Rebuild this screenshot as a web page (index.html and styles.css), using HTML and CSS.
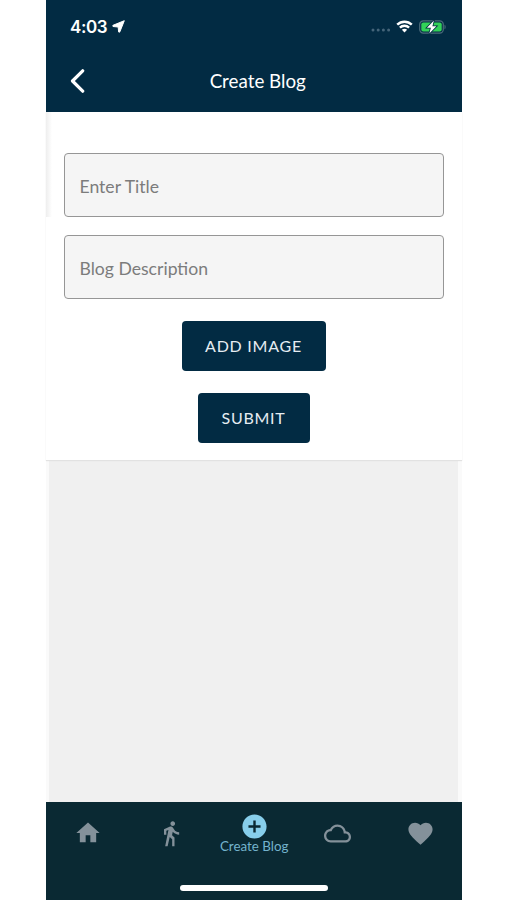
FILE: index.html
```html
<!DOCTYPE html>
<html lang="en">
  <head>
    <meta charset="utf-8">
    <title>Create Blog</title>
    <link rel="stylesheet" href="styles.css">
  </head>
  <body>
    <div class="phone">
      <header class="header">
        <div class="status-bar">
          <span class="time">4:03</span>
          <svg class="location" width="13" height="13" viewBox="0 0 13 13">
            <path d="M12.3.7 7.8 11.9Q7.2 12.7 6.6 11.9L6.2 7 1 6.5Q.2 5.9 1 5.3Z"/>
          </svg>
          <div class="status-icons">
            <svg class="signal" width="20" height="4" viewBox="0 0 20 4">
              <circle cx="2" cy="2" r="1.5"/><circle cx="7.2" cy="2" r="1.5"/><circle cx="12.4" cy="2" r="1.5"/><circle cx="17.6" cy="2" r="1.5"/>
            </svg>
            <svg class="wifi" width="17" height="13" viewBox="0 0 17 13">
              <path d="M8.5 8.7c-1 0-1.9.4-2.6 1L8.5 12.6 11.1 9.7C10.4 9.1 9.5 8.7 8.5 8.7Z"/>
              <path class="arc" d="M3.9 7.6a6.6 6.6 0 0 1 9.2 0M1.2 4.7a10.4 10.4 0 0 1 14.6 0"/>
            </svg>
            <svg class="battery" width="28" height="14" viewBox="0 0 28 14">
              <rect class="case" x=".7" y=".9" width="23.6" height="12.2" rx="3.6"/>
              <path class="cap" d="M25.5 4.7c1.5.5 1.5 4.1 0 4.6Z"/>
              <rect class="charge" x="2.3" y="2.5" width="20.4" height="9" rx="2"/>
              <path class="bolt" d="M14.9.5 7.9 7.8h4L10.3 13.5 17.4 6.2h-4Z"/>
            </svg>
          </div>
        </div>
        <div class="title-bar">
          <svg class="back" width="16" height="24" viewBox="0 0 16 24">
            <path d="M12.7 1.8 2.5 12 12.7 22.2"/>
          </svg>
          <h1>Create Blog</h1>
        </div>
      </header>

      <main class="content">
        <form class="card">
          <div class="field">Enter Title</div>
          <div class="field">Blog Description</div>
          <button type="button" class="button">ADD IMAGE</button>
          <button type="button" class="button">SUBMIT</button>
        </form>
      </main>

      <nav class="tabs">
        <a class="tab">
          <svg width="28" height="28" viewBox="0 0 24 24"><path d="M10 20v-6h4v6h5v-8h3L12 3 2 12h3v8z"/></svg>
        </a>
        <a class="tab">
          <svg width="28" height="29" viewBox="0 0 24 24"><path d="M13.5 5.5c1.1 0 2-.9 2-2s-.9-2-2-2-2 .9-2 2 .9 2 2 2zM9.8 8.9 7 23h2.1l1.8-8 2.1 2v6h2v-7.5l-2.1-2 .6-3C14.8 12 16.8 13 19 13v-2c-1.9 0-3.5-1-4.3-2.4l-1-1.6c-.4-.6-1-1-1.7-1-.3 0-.5.1-.8.1L6 8.3V13h2V9.6l1.8-.7"/></svg>
        </a>
        <a class="tab active">
          <svg width="29" height="29" viewBox="0 0 24 24"><path d="M12 2C6.48 2 2 6.48 2 12s4.48 10 10 10 10-4.48 10-10S17.52 2 12 2zm5 11h-4v4h-2v-4H7v-2h4V7h2v4h4v2z"/></svg>
          <span>Create Blog</span>
        </a>
        <a class="tab">
          <svg width="27" height="27" viewBox="0 0 24 24"><path d="M19.35 10.04C18.67 6.59 15.64 4 12 4 9.11 4 6.6 5.64 5.35 8.04 2.34 8.36 0 10.91 0 14c0 3.31 2.69 6 6 6h13c2.76 0 5-2.24 5-5 0-2.64-2.05-4.78-4.65-4.96zM19 18H6c-2.21 0-4-1.79-4-4s1.79-4 4-4h.71C7.37 7.69 9.48 6 12 6c3.04 0 5.5 2.46 5.5 5.5v.5H19c1.66 0 3 1.34 3 3s-1.34 3-3 3z"/></svg>
        </a>
        <a class="tab">
          <svg width="29" height="29" viewBox="0 0 24 24"><path d="m12 21.35-1.45-1.32C5.4 15.36 2 12.28 2 8.5 2 5.42 4.42 3 7.5 3c1.74 0 3.41.81 4.5 2.09C13.09 3.81 14.76 3 16.5 3 19.58 3 22 5.42 22 8.5c0 3.78-3.4 6.86-8.55 11.54L12 21.35z"/></svg>
        </a>
        <div class="home-indicator"></div>
      </nav>
    </div>
  </body>
</html>
```
FILE: styles.css
```css
body{
  margin: 0;
  background: white;
  font-family: Lato, sans-serif;
}
.phone{
  display: flex;
  flex-direction: column;
  width: 415.5px;
  height: 900px;
  margin-left: 46px;
}

/* header */
.header{
  height: 111.5px;
  background: #022b43;
  color: white;
}
.status-bar{
  display: flex;
  align-items: center;
  height: 53px;
  padding: 0 15px 0 24px;
}
.time{
  font: 600 17px Inter, sans-serif;
  letter-spacing: -0.4px;
}
.location{
  margin-left: 4.5px;
  fill: white;
  stroke: white;
  stroke-width: 1;
  stroke-linejoin: round;
}
.status-icons{
  display: flex;
  align-items: center;
  margin-left: auto;
}
.signal{
  margin: 7px 5px 0 0;
  fill: #45657a;
}
.wifi{
  margin-right: 6px;
  fill: white;
}
.arc{
  fill: none;
  stroke: white;
  stroke-width: 2.4;
}
.case{
  fill: none;
  stroke: #4c6b7b;
  stroke-width: 1.2;
}
.cap{
  fill: #4c6b7b;
}
.charge{
  fill: #32d158;
}
.bolt{
  fill: white;
  stroke: #022b43;
  stroke-width: 1.6;
  paint-order: stroke;
}
.title-bar{
  display: grid;
  grid-template-columns: 52px 1fr 44px;
  align-items: center;
  height: 56px;
}
.back{
  margin-left: 23.5px;
  fill: none;
  stroke: white;
  stroke-width: 3.2;
  stroke-linecap: round;
  stroke-linejoin: round;
}
.title-bar h1{
  margin: 0 0 1px;
  font-size: 18.8px;
  font-weight: 400;
  text-align: center;
}

/* form */
.content{
  flex: 1;
  background: linear-gradient(90deg, #fafafa 3px, #f0f0f0 3px, #f0f0f0 412px, #fafafa 412px);
}
.card{
  display: flex;
  flex-direction: column;
  align-items: center;
  box-sizing: border-box;
  height: 348.5px;
  padding: 41px 17.5px 0 18px;
  background: linear-gradient(90deg, #eee, #fff) 0 0 / 6px 105px no-repeat, #fff;
  box-shadow: 0 1px 1px #e2e2e2;
}
.field{
  box-sizing: border-box;
  width: 100%;
  height: 64.5px;
  margin-bottom: 17.5px;
  padding-left: 14.5px;
  border: 1px solid #969696;
  border-radius: 4px;
  background: #f5f5f5;
  color: #7c7c7c;
  font-size: 17.6px;
  line-height: 66px;
}
.button{
  height: 50px;
  margin: 4.5px 0 17.5px;
  padding: 0 24.5px 0 23.5px;
  border: 0;
  border-radius: 4px;
  background: #022b43;
  color: #e6edf2;
  font-family: Lato, sans-serif;
  font-size: 16px;
  letter-spacing: 0.75px;
}

/* bottom tabs */
.tabs{
  position: relative;
  display: grid;
  grid-template-columns: repeat(5, 1fr);
  height: 98px;
  background: #0a2933;
}
.tab{
  display: flex;
  flex-direction: column;
  align-items: center;
  justify-content: center;
  height: 62px;
  padding-left: 1px;
  color: #84919a;
}
.tab svg{
  fill: currentColor;
}
.active{
  color: #87ceeb;
}
.active span{
  margin-top: -2px;
  color: #74b3cd;
  font-size: 13.4px;
  line-height: 15px;
  white-space: nowrap;
}
.home-indicator{
  position: absolute;
  bottom: 9px;
  left: 134px;
  width: 148px;
  height: 6px;
  border-radius: 3px;
  background: white;
}
```
